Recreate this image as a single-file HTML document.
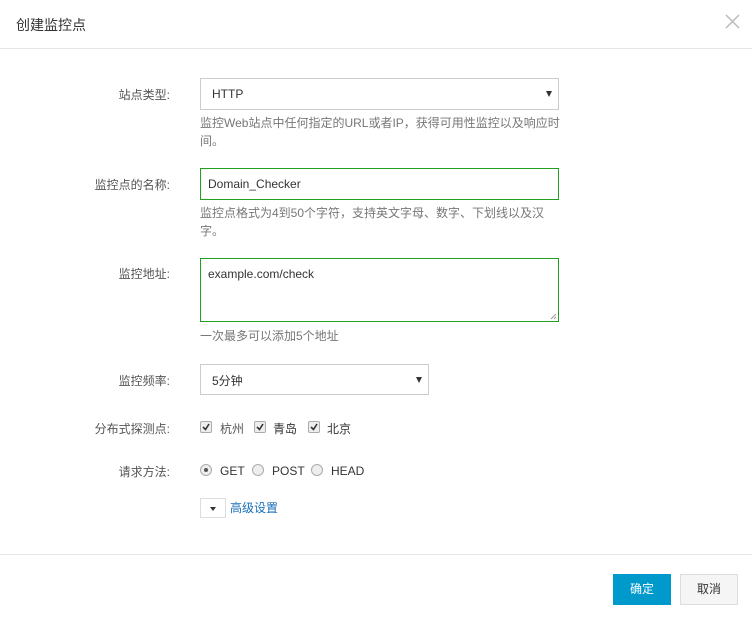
<!DOCTYPE html>
<html><head><meta charset="utf-8"><style>
*{margin:0;padding:0;box-sizing:border-box}
body{width:752px;height:624px;background:#fff;font-family:"Liberation Sans","Noto Sans CJK SC",sans-serif;font-size:12px;color:#333;position:relative;overflow:hidden}
.a{position:absolute}
.lbl{position:absolute;right:582px;color:#555;font-size:12px;white-space:nowrap}
.help{position:absolute;left:200px;width:365px;color:#777;font-size:12px;line-height:18px}
.box{position:absolute;border:1px solid #ccc;background:#fff}
.green{border-color:#1fa11f}
.arr{position:absolute;right:6px;top:12px;width:0;height:0;border-left:3.5px solid transparent;border-right:3.5px solid transparent;border-top:6px solid #333}
.cb{position:absolute;width:12px;height:12px;border:1px solid #aaa;border-radius:2px;background:#eee}
.cb svg{position:absolute;left:1px;top:1px}
.rd{position:absolute;width:12px;height:12px;border:1px solid #aaa;border-radius:50%;background:#eee}
</style></head><body>
<div class="a" style="left:16px;top:15px;font-size:14px;color:#333">创建监控点</div>
<svg class="a" style="left:725px;top:14px" width="15" height="15"><path d="M1 1L14 14M14 1L1 14" stroke="#bbb" stroke-width="1.5"/></svg>
<div class="a" style="left:0;top:48px;width:752px;height:1px;background:#e5e5e5"></div>

<div class="lbl" style="top:86px">站点类型:</div>
<div class="box" style="left:200px;top:78px;width:359px;height:32px"><span class="a" style="left:11px;top:8px">HTTP</span><div class="arr"></div></div>
<div class="help" style="top:114px">监控Web站点中任何指定的URL或者IP，获得可用性监控以及响应时间。</div>

<div class="lbl" style="top:176px">监控点的名称:</div>
<div class="box green" style="left:200px;top:168px;width:359px;height:32px"><span class="a" style="left:7px;top:8px">Domain_Checker</span></div>
<div class="help" style="top:204px">监控点格式为4到50个字符，支持英文字母、数字、下划线以及汉字。</div>

<div class="lbl" style="top:265px">监控地址:</div>
<div class="box green" style="left:200px;top:258px;width:359px;height:64px"><span class="a" style="left:7px;top:8px">example.com/check</span>
<svg class="a" style="right:1px;bottom:1px" width="7" height="7"><path d="M6 1L1 6M6 4L4 6" stroke="#999"/></svg></div>
<div class="help" style="top:327px">一次最多可以添加5个地址</div>

<div class="lbl" style="top:372px">监控频率:</div>
<div class="box" style="left:200px;top:364px;width:229px;height:31px"><span class="a" style="left:11px;top:7px">5分钟</span><div class="arr"></div></div>

<div class="lbl" style="top:420px">分布式探测点:</div>
<div class="cb" style="left:200px;top:421px"><svg width="8" height="8"><path d="M1 4L3.5 6.5L7 1" stroke="#333" stroke-width="1.6" fill="none"/></svg></div>
<span class="a" style="left:220px;top:420px;color:#555">杭州</span>
<div class="cb" style="left:254px;top:421px"><svg width="8" height="8"><path d="M1 4L3.5 6.5L7 1" stroke="#333" stroke-width="1.6" fill="none"/></svg></div>
<span class="a" style="left:273px;top:420px">青岛</span>
<div class="cb" style="left:308px;top:421px"><svg width="8" height="8"><path d="M1 4L3.5 6.5L7 1" stroke="#333" stroke-width="1.6" fill="none"/></svg></div>
<span class="a" style="left:327px;top:420px">北京</span>

<div class="lbl" style="top:463px">请求方法:</div>
<div class="rd" style="left:200px;top:464px"><div class="a" style="left:3px;top:3px;width:4px;height:4px;border-radius:50%;background:#555"></div></div>
<span class="a" style="left:220px;top:464px">GET</span>
<div class="rd" style="left:252px;top:464px"></div>
<span class="a" style="left:272px;top:464px">POST</span>
<div class="rd" style="left:311px;top:464px"></div>
<span class="a" style="left:331px;top:464px">HEAD</span>

<div class="box" style="left:200px;top:498px;width:26px;height:20px;border-color:#ddd"><div class="a" style="left:9px;top:8px;border-left:3.5px solid transparent;border-right:3.5px solid transparent;border-top:4px solid #333"></div></div>
<span class="a" style="left:230px;top:499px;color:#1a6fb8">高级设置</span>

<div class="a" style="left:0;top:554px;width:752px;height:1px;background:#e5e5e5"></div>
<div class="a" style="left:613px;top:574px;width:58px;height:31px;background:#0099cc;color:#fff;text-align:center;line-height:31px">确定</div>
<div class="a" style="left:680px;top:574px;width:58px;height:31px;background:#f5f5f5;border:1px solid #ddd;color:#333;text-align:center;line-height:29px">取消</div>
</body></html>
